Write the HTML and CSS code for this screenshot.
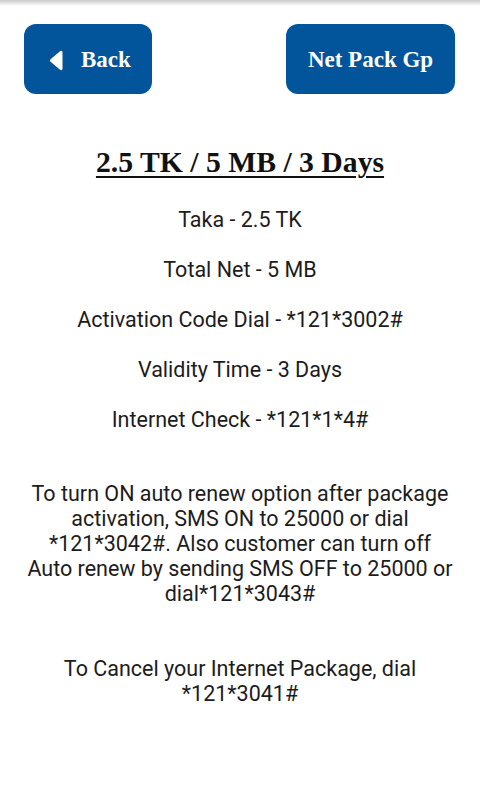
FILE: index.html
```html
<!DOCTYPE html>
<html>
<head>
<meta charset="utf-8">
<link rel="stylesheet" href="styles.css">
</head>
<body>
<div class="topshade"></div>
<div class="page">
  <div class="buttons">
    <div class="btn back">
      <svg class="arrow" width="14" height="21" viewBox="0 0 14 21"><path d="M11 1.2 Q13.5 -0.2 13.5 2.5 L13.5 18.5 Q13.5 21.2 11 19.8 L1.6 11.8 Q0.4 10.5 1.6 9.2 Z" fill="#fff"/></svg>
      <span>Back</span>
    </div>
    <div class="btn net">Net Pack Gp</div>
  </div>
  <h1 class="title">2.5 TK / 5 MB / 3 Days</h1>
  <div class="lines">
    <p>Taka - 2.5 TK</p>
    <p>Total Net - 5 MB</p>
    <p>Activation Code Dial - *121*3002#</p>
    <p>Validity Time - 3 Days</p>
    <p>Internet Check - *121*1*4#</p>
  </div>
  <p class="para renew">To turn ON auto renew option after package activation, SMS ON to 25000 or dial *121*3042#. Also customer can turn off Auto renew by sending SMS OFF to 25000 or dial*121*3043#</p>
  <p class="para cancel">To Cancel your Internet Package, dial *121*3041#</p>
</div>
</body>
</html>
```
FILE: styles.css
```css
html, body {
  margin: 0;
  padding: 0;
  background: #fff;
}
body {
  width: 480px;
  height: 800px;
  overflow: hidden;
  position: relative;
  font-family: Roboto, "Noto Sans", sans-serif;
  color: #1c1c1c;
}
.topshade {
  position: absolute;
  top: 0;
  left: 0;
  right: 0;
  height: 6px;
  background: linear-gradient(#c9c9c9, rgba(255,255,255,0));
}
.page {
  display: flex;
  flex-direction: column;
  align-items: center;
}
.buttons {
  width: 100%;
  box-sizing: border-box;
  display: flex;
  justify-content: space-between;
  padding: 24px 25px 0 24px;
}
.btn {
  height: 70px;
  background: #02549b;
  border-radius: 12px;
  color: #fff;
  font-family: "Liberation Serif", serif;
  font-weight: bold;
  font-size: 23px;
  display: flex;
  align-items: center;
  justify-content: center;
  box-sizing: border-box;
  padding-top: 2px;
}
.back {
  width: 128px;
  justify-content: flex-start;
  padding-left: 25px;
  gap: 18px;
}
.net {
  width: 169px;
}
.arrow {
  display: block;
  margin-top: 1px;
}
.title {
  margin: 50px 0 0 0;
  font-family: "Liberation Serif", serif;
  font-weight: bold;
  font-size: 29.7px;
  line-height: 36px;
  text-decoration: underline;
  text-decoration-thickness: 2px;
  text-underline-offset: 4px;
  color: #111;
}
.lines {
  margin-top: 15px;
  display: flex;
  flex-direction: column;
  align-items: center;
}
.lines p {
  margin: 0;
  font-size: 21.5px;
  line-height: 50px;
}
.para {
  margin: 0;
  font-size: 21.5px;
  line-height: 25px;
  text-align: center;
  width: 100%;
  box-sizing: border-box;
}
.renew {
  margin-top: 35.5px;
  padding: 0 24px;
}
.cancel {
  margin-top: 50px;
  padding: 0 30px;
}
```
